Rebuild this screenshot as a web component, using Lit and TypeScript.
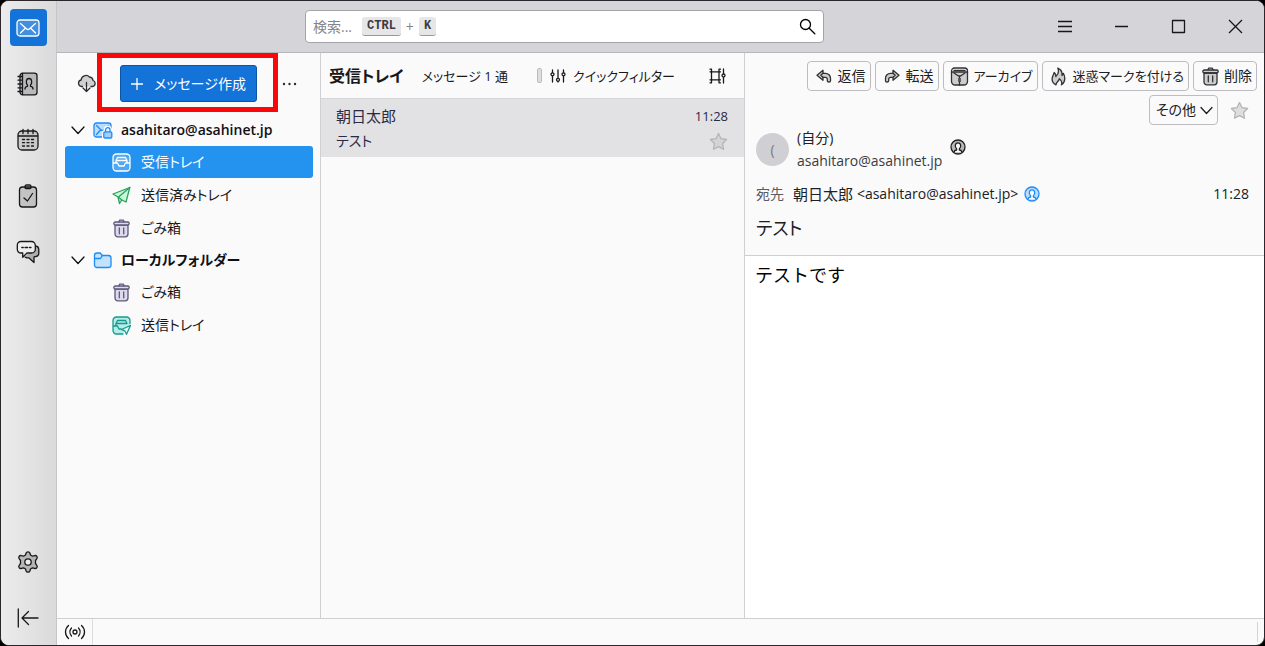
import { LitElement, html, css, svg, TemplateResult } from "lit";
import { customElement } from "lit/decorators.js";
import { classMap } from "lit/directives/class-map.js";

const icons: Record<string, TemplateResult> = {
  mail: svg`<rect x="1" y="4" width="22" height="16" rx="3" fill="#ffffff33"/><path d="M4.5 7.5l5.9 5.3a2.4 2.4 0 0 0 3.2 0l5.9-5.3M4.5 17l5-5M19.5 17l-5-5"/>`,
  book: svg`<rect x="4" y="1.2" width="17" height="21.6" rx="2.6" fill="#0000002e"/><path d="M2 4.5h4M2 8.2h4M2 12h4M2 15.8h4M2 19.5h4M9 17c0-1.700 .8-2.600 2.500-2.700v-1.300c-1.600-1.200-2-6.500 1.500-6.500s3.100 5.300 1.500 6.500v1.300c1.700.1 2.500 1 2.500 2.700M6.500 1.500v21"/>`,
  calendar: svg`<rect x="2" y="3" width="20" height="19" rx="4" fill="#0000001c"/><path d="M2.500 8h19" /><path d="M7 1.500v4M12 1.500v4M17 1.500v4"/><path d="M6.500 11.500h2M11 11.500h2M15.500 11.500h2M6.500 14.700h2M11 14.700h2M15.500 14.700h2M6.500 18h2M11 18h2M15.500 18h2"/>`,
  tasks: svg`<rect x="3.500" y="3" width="17" height="20" rx="3" fill="#00000024"/><path d="M9 3.500v-1a1.500 1.500 0 0 1 1.500-1.500h3a1.500 1.500 0 0 1 1.500 1.500v1a1 1 0 0 1-1 1h-4a1 1 0 0 1-1-1zM8 14l3.500 3 5-7.500"/>`,
  chat: svg`<path d="M19.500 6c2.200.2 3.300 1.800 3.300 4v3c0 2-1.200 3.400-3.300 3.600L18 16.800v5.700l-5.300-4.700h-2L9 17" fill="#0000003a"/><path d="M5 1.500h10.500a3.800 3.800 0 0 1 3.800 3.800v3.900a3.800 3.800 0 0 1-3.800 3.800H11l-4.300 4.300V13H5a3.700 3.700 0 0 1-3.700-3.700V5.200A3.700 3.700 0 0 1 5 1.500z" fill="#eee"/><path d="M5.800 7.500h1.500M9 7.500h2.700M13.500 7.500H15"/>`,
  gear: svg`<path d="M10 3.300a2.100 2.100 0 0 1 4 0l.5 1.700 2 1.200 2-.5a2 2 0 0 1 2.200 3.200L19.500 10.500v3l1.200 1.600a2 2 0 0 1-2.200 3.200l-2-.5-2 1.200-.5 1.700a2.100 2.100 0 0 1-4 0L9.500 19l-2-1.200-2 .5a2 2 0 0 1-2.200-3.200L4.500 13.500v-3L3.300 8.900a2 2 0 0 1 2.200-3.200l2 .5 2-1.200z" fill="#00000033"/><circle cx="12" cy="12" r="3.200" fill="#eee"/>`,
  collapse: svg`<path d="M2.300 3v18M22 12H6M12.500 5.500L6 12l6.500 6.500"/>`,
  cloud: svg`<path d="M5.500 12.500H4.600a3.300 3.300 0 0 1-.5-6.500A4.900 4.900 0 0 1 12.500 3a3.900 3.900 0 0 1 3.500 3.500 3.100 3.100 0 0 1-.5 6H14" fill="#0000002a"/><path d="M9.500 8.500v9M6 14l3.500 3.500L13 14"/>`,
  plus: svg`<path d="M6 .5v11M.5 6h11"/>`,
  dots: svg`<g fill="currentColor" stroke="none"><circle cx="2" cy="8" r="1.200"/><circle cx="7.500" cy="8" r="1.200"/><circle cx="13" cy="8" r="1.200"/></g>`,
  chevron: svg`<path d="M1 1l6 6.500L13 1"/>`,
  smallChevron: svg`<path d="M1 1.500l5.500 6 5.500-6"/>`,
  account: svg`<rect x="1" y="2" width="17" height="14" rx="2.500" fill="#b9dcff"/><path d="M3.500 4.500l4 4a2.600 2.600 0 0 0 4 0l4-4M3.500 13.500l3.500-4"/><path d="M12.500 10.500v-1.600a2.300 2.300 0 0 1 4.600 0v1.600" stroke="#fafafa" stroke-width="4"/><rect x="10.500" y="10.500" width="8.600" height="6.800" rx="1.200" fill="#9fcfff" stroke="#fafafa" stroke-width="3"/><rect x="10.800" y="10.800" width="8" height="6.200" rx="1.200" fill="#9fcfff"/><path d="M12.600 10.500V8.900a2.200 2.200 0 0 1 4.400 0v1.600"/>`,
  folder: svg`<path d="M1.500 14V4.500A2.500 2.500 0 0 1 4 2h3.200l2 2.500h6.300A2.500 2.500 0 0 1 18 7v7a2.500 2.500 0 0 1-2.500 2.500H4A2.500 2.500 0 0 1 1.500 14z" fill="#c2e2ff"/><path d="M1.500 7.500h6l2-3"/>`,
  inbox: svg`<rect x="1" y="1" width="17" height="17" rx="3.500" fill="#ffffff33"/><path d="M4 9.500V7.500l1.500-3h8l1.500 3v2M1.500 10h4l1.500 3h5l1.500-3h4M4.500 7.500h10"/>`,
  sent: svg`<path d="M17.800 1.500L1 8l5 3 1.500 6.500L9.800 14l4.200 2z" fill="#c9f5da"/><path d="M17.800 1.500L6.500 11l3.300 3"/>`,
  trash: svg`<path d="M3 6h13v9a2.800 2.800 0 0 1-2.800 2.800H5.800A2.800 2.800 0 0 1 3 15z" fill="var(--tint)"/><rect x="1.800" y="3" width="15.400" height="3" rx="1.500" fill="var(--tint)"/><path d="M7 2.800l.6-1.600h3.800l.6 1.600M7.300 8.800v6M11.700 8.800v6"/>`,
  outbox: svg`<path d="M18 8V4.500A3.500 3.500 0 0 0 14.500 1h-10A3.500 3.500 0 0 0 1 4.500v10A3.500 3.500 0 0 0 4.500 18H11l1-3 6-5z" fill="#b4ece6" stroke="none"/><path d="M18 7.500v-3A3.500 3.500 0 0 0 14.500 1h-10A3.500 3.500 0 0 0 1 4.500v10A3.500 3.500 0 0 0 4.500 18H11M4 9.500V7.500l1.500-3h8l1.500 3M1.500 10h4l1.500 3h2M4.500 7.500h10"/><path d="M18.500 9.500l-9 4 3.200 1.300L14.500 18.300z" fill="#e9fbf8"/>`,
  search: svg`<circle cx="6.500" cy="6.500" r="5"/><path d="M10.200 10.200l5.600 5.600"/>`,
  menu: svg`<path d="M1 2.500h14M1 7.500h14M1 12.500h14"/>`,
  minimize: svg`<path d="M1 7.500h13"/>`,
  maximize: svg`<rect x="1.500" y="1.500" width="12" height="12"/>`,
  close: svg`<path d="M1 1l13 13M14 1L1 14"/>`,
  filter: svg`<path d="M2.500 8v6M8 2v7.500M8 13.500v.5M13.500 2v2.500M13.500 8v6M2.500 2v2.500"/><circle cx="2.500" cy="6.300" r="1.500"/><circle cx="8" cy="11.800" r="1.500"/><circle cx="13.500" cy="6.300" r="1.500"/>`,
  display: svg`<path d="M1 1.200h1.500v2.600M1 3.800h10.500M10 3.800V1.200h1.500M1 14.800h1.500v-3M1 11.800h10.500M10 11.800v3h1.500M2.500 3.800v8M10 3.800v8M14.500 1v4.500M14.500 9.500v5.500"/><circle cx="14.500" cy="7.500" r="1.500"/>`,
  star: svg`<path d="M9.500 1.500l2.500 5.200 5.600.8-4 4 .9 5.800-5-2.700-5 2.700.9-5.800-4-4 5.600-.8z" fill="var(--tint)"/>`,
  reply: svg`<path d="M7 1.300v3h2.500a5 5 0 0 1 5 5v2.500c0 1.600-3 1.600-3.200 0v-1.500a2 2 0 0 0-2-2H7v3L1 6.300z" fill="#0000002e"/><path d="M7 4.300L4.800 6.300 7 8.300"/>`,
  forward: svg`<path d="M9 1.300v3H6.500a5 5 0 0 0-5 5v2.500c0 1.600 3 1.600 3.200 0v-1.500a2 2 0 0 1 2-2H9v3l6-5z" fill="#0000002e"/><path d="M9 4.300l2.200 2L9 8.300"/>`,
  archive: svg`<path d="M1.500 5h16v9.500a3.500 3.500 0 0 1-3.500 3.500H5a3.500 3.500 0 0 1-3.500-3.500z" fill="#0000002e"/><path d="M1.500 5.500V4A3 3 0 0 1 4.500 1h10a3 3 0 0 1 3 3v1.500M4 3.500h11M4 6l4.500 3h2L15 6M9.500 9v1.500M8.500 12h2M8.500 14h2M9.500 15.500V18"/>`,
  flame: svg`<path d="M5 17.800C2.200 16.500.8 14 1.200 11.200 1.500 9 2.800 7.500 3.200 5.500 4.500 6.500 5 8 4.800 9.500 7 7.500 8.300 4.500 6.800 1.200c3.200 1.300 4.600 4 4.200 7.300.8-.5 1.200-1.200 1.300-2.200 1.800 2.600 2.700 8.700-1.900 11.500 1-2.300.3-4.300-2.100-6-.3 2.500-3.300 3-3.300 6z" fill="#0000002e"/>`,
  contact: svg`<circle cx="8" cy="8" r="7" fill="var(--tint)"/><path d="M4 13.200c.2-1.400 1-2 2.600-2.200V9.700C4.600 8.200 4.800 3.800 8 3.800s3.400 4.400 1.400 5.900V11c1.600.2 2.400.8 2.600 2.200" fill="#fafafa"/>`,
  signal: svg`<circle cx="11" cy="8" r="2"/><path d="M7.500 4a6 6 0 0 0 0 8M14.500 4a6 6 0 0 1 0 8M4.500 1.500C.5 5 .5 11 4.500 14.500M17.500 1.500c4 3.500 4 9.500 0 13"/>`,
};

const icon = (name: string, w: number, h: number, cls = "") =>
  html`<svg class="icon ${cls}" width=${w} height=${h} viewBox="0 0 ${w} ${h}" aria-hidden="true">${icons[name]}</svg>`;

const base = css`
  :host { display: block; box-sizing: border-box; }
  *, *::before, *::after { box-sizing: border-box; }
  button, input, a { font: inherit; color: inherit; font-feature-settings: inherit; }
  button { border: 0; padding: 0; margin: 0; background: none; display: inline-flex; align-items: center; justify-content: center; white-space: nowrap; }
  a { text-decoration: none; }
  ul { list-style: none; margin: 0; padding: 0; }
  h1, h2, p { margin: 0; font: inherit; }
  .icon { flex: none; display: block; fill: none; stroke: currentColor; stroke-width: 1.3; stroke-linecap: round; stroke-linejoin: round; }
`;

@customElement("spaces-bar")
class SpacesBar extends LitElement {
  static styles = [base, css`
    :host { background: linear-gradient(90deg, #ececec, #dadada); border-right: 1px solid #c6c6c8; }
    nav { height: 100%; display: flex; flex-direction: column; gap: 19px; align-items: center; padding: 8px 1px 9px 0; }
    button { width: 37px; height: 37px; border-radius: 4px; color: #18181b; }
    .current { background: #1373d9; color: #fff; }
    .spacer { flex: 1; }
  `];
  render() {
    const top = [["mail", "メール"], ["book", "アドレス帳"], ["calendar", "カレンダー"], ["tasks", "ToDo"], ["chat", "チャット"]];
    return html`<nav>
      ${top.map(([name, label], i) => html`<button class=${classMap({ current: i === 0 })} aria-label=${label}>${icon(name, 24, 24)}</button>`)}
      <div class="spacer"></div>
      <button aria-label="設定">${icon("gear", 24, 24)}</button>
      <button aria-label="折りたたむ">${icon("collapse", 24, 24)}</button>
    </nav>`;
  }
}

@customElement("title-bar")
class TitleBar extends LitElement {
  static styles = [base, css`
    :host { display: grid; grid-template-columns: minmax(0, 248fr) minmax(200px, 519px) minmax(230px, 440fr); align-items: center; background: #d4d4d9; border-bottom: 1px solid #b6b6ba; }
    form { grid-column: 2; position: relative; height: 33px; display: flex; background: #fff; border: 1px solid #a3a3a8; border-radius: 4px; }
    input { flex: 1; min-width: 0; border: 0; background: none; padding: 0 8px; outline: 0; }
    label { position: absolute; left: 7px; top: 0; height: 31px; display: flex; align-items: center; color: #84848a; pointer-events: none; font-size: 14px; }
    kbd { font: bold 12px/18px "Liberation Mono", monospace; color: #3b3b40; background: #e6e6e8; border-radius: 3px; padding: 0 5px; border-bottom: 1px solid #98989c; }
    .hint { margin: 0 10px 0 0; }
    .join { margin: 0 5px; }
    .go { width: 32px; }
    .window { display: flex; justify-content: flex-end; }
    .window button { width: 57px; height: 40px; }
    .window .icon { stroke-linecap: butt; color: #18181b; }
  `];
  render() {
    return html`
      <form role="search">
        <input id="q" type="search" />
        <label for="q"><span class="hint">検索...</span><kbd>CTRL</kbd><span class="join">+</span><kbd>K</kbd></label>
        <button class="go" type="button" aria-label="検索">${icon("search", 17, 17)}</button>
      </form>
      <div class="window">
        <button aria-label="メニュー">${icon("menu", 16, 15)}</button>
        <button aria-label="最小化">${icon("minimize", 15, 15)}</button>
        <button aria-label="最大化">${icon("maximize", 15, 15)}</button>
        <button aria-label="閉じる">${icon("close", 15, 15)}</button>
      </div>`;
  }
}

interface Folder { name: string; icon: string; kind: string; selected?: boolean; }
interface Account { name: string; icon: string; folders: Folder[]; }

@customElement("folder-pane")
class FolderPane extends LitElement {
  static styles = [base, css`
    :host { background: #fafafa; border-right: 1px solid #d0d0d2; font-size: 14px; line-height: 20px; }
    .head { display: flex; align-items: center; padding: 12px 20px 0 20px; color: #2b2b30; }
    .compose-wrap { position: relative; margin: 0 25px 0 23px; }
    .compose { width: 137px; height: 37px; gap: 11px; background: #1373d9; border: 1px solid #0c54a6; border-radius: 3px; color: #fff; }
    .mark { position: absolute; inset: -12px -21px -10px -23px; border: 5px solid #f80808; pointer-events: none; }
    .tree { padding: 12px 7px 0 8px; }
    .tree ul { display: grid; gap: 1px; }
    .account { display: flex; align-items: center; height: 32px; padding-left: 6px; font-weight: 600; color: #101014; }
    .account .icon-kind { margin: 0 8px; color: #1f8bf5; }
    .row { display: flex; align-items: center; height: 32px; padding-left: 47px; gap: 10px; border-radius: 3px; color: #18181b; }
    .sent .icon { color: #2aa35c; }
    .trash .icon { color: #5c5878; --tint: #dcdaec; }
    .outbox .icon { color: #17998f; }
    .selected { background: #2493ef; color: #fff; }
  `];
  accounts: Account[] = [
    { name: "asahitaro@asahinet.jp", icon: "account", folders: [
      { name: "受信トレイ", icon: "inbox", kind: "inbox", selected: true },
      { name: "送信済みトレイ", icon: "sent", kind: "sent" },
      { name: "ごみ箱", icon: "trash", kind: "trash" },
    ] },
    { name: "ローカルフォルダー", icon: "folder", folders: [
      { name: "ごみ箱", icon: "trash", kind: "trash" },
      { name: "送信トレイ", icon: "outbox", kind: "outbox" },
    ] },
  ];
  render() {
    return html`
      <div class="head">
        <button aria-label="受信">${icon("cloud", 20, 19)}</button>
        <div class="compose-wrap">
          <button class="compose">${icon("plus", 12, 12)}メッセージ作成</button>
          <div class="mark"></div>
        </div>
        <button aria-label="オプション">${icon("dots", 15, 16)}</button>
      </div>
      <ul class="tree">${this.accounts.map((a) => html`<li>
        <div class="account">${icon("chevron", 14, 9)}${icon(a.icon, 20, 18, "icon-kind")}<span>${a.name}</span></div>
        <ul>${a.folders.map((f) => html`<li><a href="#" class=${classMap({ row: true, [f.kind]: true, selected: !!f.selected })}>${icon(f.icon, 19, 19)}${f.name}</a></li>`)}</ul>
      </li>`)}</ul>`;
  }
}

@customElement("thread-pane")
class ThreadPane extends LitElement {
  static styles = [base, css`
    :host { background: #fafafa; border-right: 1px solid #d0d0d2; font-size: 13px; line-height: 20px; color: #18181b; }
    header { display: flex; align-items: center; height: 46px; padding: 0 18px 0 8px; border-bottom: 1px solid #d6d6d8; white-space: nowrap; }
    h1 { font-size: 16px; font-weight: 700; }
    .count { margin-left: 18px; }
    .right { margin-left: auto; display: flex; align-items: center; }
    .grip { width: 5px; height: 15px; border: 1px solid #bcbcc0; border-radius: 2px; background: #dedee0; margin-right: 8px; }
    .quick { gap: 7px; margin-right: 34px; }
    .card { display: grid; grid-template-columns: 1fr auto; row-gap: 5px; align-items: center; padding: 7px 16px 6px 15px; height: 58px; background: #e2e2e5; color: #2a2a42; }
    .card > :nth-child(even) { justify-self: end; }
    .sender { font-size: 15px; }
    .subject { font-size: 14px; }
    .star { color: #b4b4b8; --tint: #d4d4d7; }
  `];
  render() {
    return html`
      <header>
        <h1>受信トレイ</h1><span class="count">メッセージ 1 通</span>
        <div class="right">
          <span class="grip"></span>
          <button class="quick">${icon("filter", 16, 16)}クイックフィルター</button>
          <button aria-label="表示オプション">${icon("display", 17, 16)}</button>
        </div>
      </header>
      <div class="card">
        <span class="sender">朝日太郎</span><time>11:28</time>
        <span class="subject">テスト</span><button class="star" aria-label="スター">${icon("star", 19, 19)}</button>
      </div>`;
  }
}

@customElement("message-pane")
class MessagePane extends LitElement {
  static styles = [base, css`
    :host { display: flex; flex-direction: column; background: #fff; color: #202024; font-size: 14px; line-height: 20px; }
    header { background: #fafafa; border-bottom: 1px solid #cfcfd1; padding: 8px 7px 15px 11px; }
    .tools { display: flex; flex-wrap: wrap; justify-content: flex-end; gap: 4px; }
    .tool { height: 30px; padding: 0 4px 0 6px; gap: 4px; border: 1px solid #bdbdc1; border-radius: 4px; --tint: #0000002e; }
    .compact { font-size: 13px; }
    .slot { width: 20px; display: grid; place-items: center; color: #303035; }
    .star { width: 35px; height: 30px; color: #b4b4b8; --tint: #dededf; }
    .from { display: flex; align-items: center; margin-top: 3px; }
    .avatar { width: 33px; height: 33px; border-radius: 50%; background: #d0d0d4; color: #77777c; display: grid; place-items: center; margin-right: 8px; }
    .names { display: grid; row-gap: 3px; margin-right: 8px; }
    .email { color: #3a3a3f; }
    .contact { --tint: #b8b8bb; align-self: flex-start; margin-top: 11px; }
    .known { color: #1f8bf5; --tint: #b9dcff; margin-left: 6px; }
    .to { display: flex; align-items: center; margin: 13px 8px 0 0; white-space: pre; }
    .label { margin-right: 9px; color: #5b5b62; }
    .name { font-size: 15px; }
    time { margin-left: auto; }
    h2 { font-size: 18px; line-height: 24px; margin-top: 12px; }
    .body { flex: 1; padding: 7px 10px; font-size: 18px; line-height: 24px; color: #000; font-feature-settings: normal; }
  `];
  tools = [
    { name: "返信", icon: "reply", w: 16, h: 14 },
    { name: "転送", icon: "forward", w: 16, h: 14 },
    { name: "アーカイブ", icon: "archive", w: 19, h: 19, compact: true },
    { name: "迷惑マークを付ける", icon: "flame", w: 15, h: 19, compact: true },
    { name: "削除", icon: "trash", w: 19, h: 19 },
  ];
  render() {
    return html`
      <header>
        <div class="tools">
          ${this.tools.map((t) => html`<button class=${classMap({ tool: true, compact: !!t.compact })}><span class="slot">${icon(t.icon, t.w, t.h)}</span>${t.name}</button>`)}
          <button class="tool" aria-haspopup="menu">その他${icon("smallChevron", 13, 9)}</button>
          <button class="star" aria-label="スター">${icon("star", 19, 19)}</button>
        </div>
        <div class="from">
          <span class="avatar">(</span>
          <div class="names"><span>(自分)</span><span class="email">asahitaro@asahinet.jp</span></div>
          <button class="contact" aria-label="連絡先">${icon("contact", 16, 16)}</button>
        </div>
        <div class="to"><span class="label">宛先</span><span class="name">朝日太郎 </span>&lt;asahitaro@asahinet.jp&gt;<button class="known" aria-label="連絡先">${icon("contact", 16, 16)}</button><time>11:28</time></div>
        <h2>テスト</h2>
      </header>
      <div class="body">テストです</div>`;
  }
}

@customElement("app-root")
class AppRoot extends LitElement {
  static styles = [base, css`
    :host { height: 100vh; background: #000; font: 14px/20px "Open Sans", "Noto Sans CJK JP", sans-serif; font-feature-settings: "palt"; }
    .window { height: 100%; display: grid; grid-template-columns: 56px minmax(0, 1fr); border: 1px solid #2a262c; border-radius: 9px; overflow: hidden; background: #fafafa; }
    .main { display: grid; grid-template-rows: 52px minmax(0, 1fr) 27px; }
    .panes { display: grid; grid-template-columns: 264px minmax(0, 424fr) minmax(0, 519fr); }
    footer { display: flex; align-items: stretch; border-top: 1px solid #cfcfd1; color: #18181b; }
    .status { padding: 0 6px 0 7px; border-right: 1px solid #dcdcde; }
    .end { margin: 3px 6px 3px auto; border-right: 1px solid #d4d4d6; }
  `];
  render() {
    return html`<div class="window">
      <spaces-bar></spaces-bar>
      <div class="main">
        <title-bar></title-bar>
        <div class="panes">
          <folder-pane></folder-pane>
          <thread-pane></thread-pane>
          <message-pane></message-pane>
        </div>
        <footer><button class="status" aria-label="オンライン">${icon("signal", 22, 16)}</button><div class="end"></div></footer>
      </div>
    </div>`;
  }
}
